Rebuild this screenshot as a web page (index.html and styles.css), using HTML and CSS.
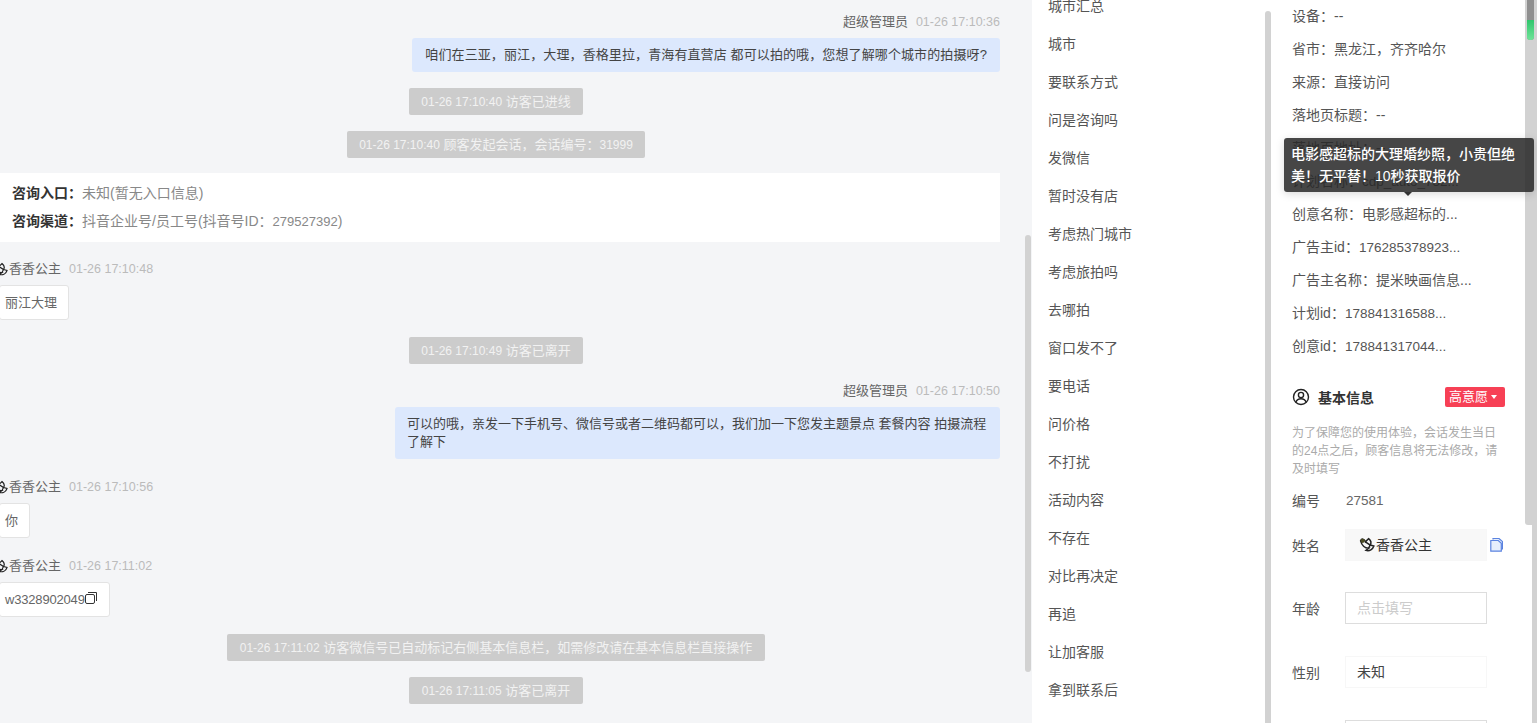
FILE: index.html
```html
<!DOCTYPE html>
<html lang="zh-CN">
<head>
<meta charset="utf-8">
<title>会话详情</title>
<link rel="stylesheet" href="styles.css">
</head>
<body>
<svg class="defs" aria-hidden="true"><defs>
  <symbol id="dove" viewBox="0 0 16 14"><path d="M1.500 3.500C2.500 1 5 1.500 6 4.500L9 1.500C11.500 3.500 11.500 6 10.500 7.500L14 8.500C13 11.500 10 13.500 6.500 12.500L9 10.500C5.500 10.500 2.500 7.500 1.500 3.500Z"/><path d="M6 4.500L10.500 7.500L9 10.500"/></symbol>
</defs></svg>
<div class="app">
  <main class="chat">
    <div class="msgs">
      <div class="head right"><span class="who">超级管理员</span><span class="time">01-26 17:10:36</span></div>
      <div class="row right"><div class="bubble blue b1">咱们在三亚，丽江，大理，香格里拉，青海有直营店 都可以拍的哦，您想了解哪个城市的拍摄呀?</div></div>
      <div class="sys s1"><span><em>01-26 17:10:40</em> 访客已进线</span></div>
      <div class="sys s2"><span><em>01-26 17:10:40</em> 顾客发起会话，会话编号：<em>31999</em></span></div>
      <div class="entry">
        <p><b>咨询入口：</b>未知(暂无入口信息)</p>
        <p><b>咨询渠道：</b>抖音企业号/员工号(抖音号ID：<em>279527392</em>)</p>
      </div>
      <div class="head left h1"><svg class="nick"><use href="#dove"/></svg><span class="who">香香公主</span><span class="time">01-26 17:10:48</span></div>
      <div class="row"><div class="bubble white">丽江大理</div></div>
      <div class="sys s3"><span><em>01-26 17:10:49</em> 访客已离开</span></div>
      <div class="head right h2"><span class="who">超级管理员</span><span class="time">01-26 17:10:50</span></div>
      <div class="row right"><div class="bubble blue b2">可以的哦，亲发一下手机号、微信号或者二维码都可以，我们加一下您发主题景点 套餐内容 拍摄流程了解下</div></div>
      <div class="head left h3"><svg class="nick"><use href="#dove"/></svg><span class="who">香香公主</span><span class="time">01-26 17:10:56</span></div>
      <div class="row"><div class="bubble white">你</div></div>
      <div class="head left h4"><svg class="nick"><use href="#dove"/></svg><span class="who">香香公主</span><span class="time">01-26 17:11:02</span></div>
      <div class="row"><div class="bubble white wechat">w3328902049<svg class="copy" viewBox="0 0 12 12"><rect x=".5" y="2.500" width="9" height="9" rx="1.500"/><path d="M3 .5h8.500V9"/></svg></div></div>
      <div class="sys s4"><span><em>01-26 17:11:02</em> 访客微信号已自动标记右侧基本信息栏，如需修改请在基本信息栏直接操作</span></div>
      <div class="sys s5"><span><em>01-26 17:11:05</em> 访客已离开</span></div>
    </div>
    <div class="thumb chat-thumb"></div>
  </main>
  <aside class="tags">
    <ul class="tag-list">
      <li>城市汇总</li><li>城市</li><li>要联系方式</li><li>问是咨询吗</li><li>发微信</li><li>暂时没有店</li><li>考虑热门城市</li><li>考虑旅拍吗</li><li>去哪拍</li><li>窗口发不了</li><li>要电话</li><li>问价格</li><li>不打扰</li><li>活动内容</li><li>不存在</li><li>对比再决定</li><li>再追</li><li>让加客服</li><li>拿到联系后</li>
    </ul>
    <div class="tags-track"><div class="thumb tags-thumb"></div></div>
  </aside>
  <section class="info">
    <div class="info-body">
      <ul class="facts">
        <li>设备：--</li>
        <li>省市：黑龙江，齐齐哈尔</li>
        <li>来源：直接访问</li>
        <li>落地页标题：--</li>
        <li class="tip-host">落地页地址：--
          <div class="tooltip">电影感超标的大理婚纱照，小贵但绝美！无平替！10秒获取报价</div>
        </li>
        <li>计划名称：<em>cdp_auto_732...</em></li>
        <li>创意名称：电影感超标的...</li>
        <li>广告主id：<em>176285378923...</em></li>
        <li>广告主名称：提米映画信息...</li>
        <li>计划id：<em>178841316588...</em></li>
        <li>创意id：<em>178841317044...</em></li>
      </ul>
      <div class="basic-head">
        <svg class="user" viewBox="0 0 18 18"><circle cx="9" cy="9" r="7.500"/><circle cx="9" cy="7" r="2.600"/><path d="M3.800 14.200c1-2.600 3-3.400 5.200-3.400s4.200.8 5.200 3.400"/></svg>
        <strong>基本信息</strong>
        <span class="level">高意愿<i class="caret"></i></span>
      </div>
      <p class="notice">为了保障您的使用体验，会话发生当日的24点之后，顾客信息将无法修改，请及时填写</p>
      <div class="field plain"><label>编号</label><span>27581</span></div>
      <div class="field name"><label>姓名</label><div class="box filled"><svg class="nick dark" viewBox="0 0 16 14"><use href="#dove"/><circle class="dove-head" cx="3.500" cy="3.500" r="2"/></svg>香香公主</div><svg class="doc" viewBox="0 0 13 14"><path d="M3 1.500V.5h6l3.500 3V11H11"/><path d="M.8 2.500h7.500l3 2.700v8H.8z"/></svg></div>
      <div class="field age"><label>年龄</label><div class="box empty">点击填写</div></div>
      <div class="field gender"><label>性别</label><div class="box soft">未知</div></div>
      <div class="field last"><div class="box empty"></div></div>
    </div>
    <div class="page-track">
      <div class="info-track"><div class="mini"><i></i></div></div>
    </div>
  </section>
</div>
</body>
</html>
```

FILE: styles.css
```css
* { box-sizing: border-box; }
html, body { margin: 0; height: 100%; overflow: hidden; }
body { font-family: "Liberation Sans", "Noto Sans CJK SC", sans-serif; font-size: 13px; color: #555; background: #fff; }
ul { list-style: none; margin: 0; padding: 0; }
p { margin: 0; }
em { font-style: normal; }
.defs { display: none; }
.app { display: flex; width: 1537px; height: 723px; overflow: hidden; }

.chat { width: 1032px; flex: none; background: #f4f5f7; position: relative; overflow: hidden; }
.msgs { width: 1000px; padding-top: 13px; }
.head { display: flex; align-items: center; height: 18px; font-size: 13px; line-height: 18px; }
.head.right { justify-content: flex-end; }
.who { color: #666; }
.time { color: #bbb; margin-left: 8px; font-size: 12.500px; }
.row { display: flex; margin-top: 7px; }
.row.right { justify-content: flex-end; }
.bubble { font-size: 13px; line-height: 18px; border-radius: 3px; }
.blue { background: #dce8fd; color: #444; }
.b1 { padding: 8px 13px; height: 34px; letter-spacing: .11px; }
.b2 { width: 605px; padding: 8px 13px 10px 12px; height: 52px; }
.white { background: #fff; border: 1px solid #e3e3e3; height: 35px; padding: 8px 11px 0 5px; margin-left: -1px; white-space: nowrap; color: #666; }
.wechat { padding-right: 12px; letter-spacing: -.18px; }
.copy { width: 12px; height: 12px; fill: none; stroke: #333; stroke-width: 1; vertical-align: 0; }
.sys { display: flex; justify-content: center; width: 992px; }
.sys span { background: #ccc; color: #f2f2f2; font-size: 13px; line-height: 27px; height: 27px; padding: 0 12px; border-radius: 2px; }
.sys em { font-size: 12px; }
.s1 { margin-top: 16px; }
.s2 { margin-top: 16px; }
.s3 { margin-top: 17px; }
.s4 { margin-top: 17px; }
.s5 { margin-top: 16px; }
.s4 span, .s5 span { padding: 0 13px; }
.entry { background: #fff; margin-top: 15px; height: 69px; padding: 6px 12px; font-size: 14px; line-height: 28px; color: #888; }
.entry em { font-size: 13px; }
.entry b { color: #333; font-weight: 700; }
.nick { width: 16px; height: 14px; fill: none; stroke: #222; stroke-width: 1.200; flex: none; margin-left: -7px; margin-right: 0; }
.nick.dark { width: 17px; height: 15px; margin-left: 0; stroke-width: 1.400; vertical-align: -2px; }
.dove-head { fill: #4b4b22; stroke: none; }
.h1 { margin-top: 18px; }
.h2 { margin-top: 18px; }
.h3 { margin-top: 19px; }
.h4 { margin-top: 19px; }

.thumb { background: #d2d2d2; border-radius: 3px; }
.chat-thumb { position: absolute; left: 1025px; top: 235px; width: 6px; height: 437px; }

.tags { width: 239px; flex: none; display: flex; background: #fff; overflow: hidden; }
.tag-list { width: 233px; margin-top: -13px; padding-left: 16px; }
.tag-list li { height: 38px; line-height: 38px; font-size: 14px; color: #555; }
.tags-track { width: 6px; padding-top: 11px; }
.tags-thumb { width: 6px; height: 800px; }

.info { flex: 1; display: flex; min-width: 0; }
.info-body { width: 254px; flex: none; padding: 0 20px 0 21px; }
.facts li { height: 33px; line-height: 33px; font-size: 14px; color: #555; white-space: nowrap; }
.facts em { font-size: 13.500px; }
.tip-host { position: relative; }
.tooltip { position: absolute; left: -8px; top: 6px; width: 250px; height: 54px; padding: 5px 7px; background: rgba(40,40,40,.86); color: #fff; font-size: 14px; font-weight: 500; line-height: 22px; border-radius: 3px; white-space: normal; z-index: 2; box-shadow: 0 2px 8px rgba(0,0,0,.15); }
.tooltip::after { content: ""; position: absolute; left: 120px; bottom: -4px; border: 4px solid transparent; border-bottom: 0; border-top-color: #333; }
.basic-head { display: flex; align-items: center; margin-top: 23px; height: 22px; }
.user { width: 18px; height: 18px; fill: none; stroke: #222; stroke-width: 1.400; margin-right: 8px; }
.basic-head strong { color: #333; font-size: 14px; font-weight: 700; }
.level { margin-left: auto; width: 60px; height: 20px; background: #f74055; color: #fff; font-size: 13px; line-height: 20px; padding-left: 4px; border-radius: 2px; display: flex; align-items: center; }
.caret { border: 3px solid transparent; border-top: 4px solid #fff; border-bottom: 0; margin-left: 3px; }
.notice { color: #aaa; font-size: 12px; line-height: 18px; margin-top: 16px; }
.field { display: flex; align-items: center; font-size: 14px; color: #555; }
.field label { width: 53px; flex: none; }
.plain { margin-top: 9px; height: 26px; }
.plain label { width: 54px; }
.plain span { color: #666; font-size: 13.500px; }
.box { width: 142px; height: 32px; line-height: 30px; padding: 0 11px; border: 1px solid #f7f7f7; flex: none; }
.filled { background: #f8f8f8; color: #333; padding-left: 13px; }
.empty { border-color: #ddd; color: #ccc; }
.soft { color: #444; }
.doc { width: 13px; height: 14px; fill: #e6eefc; stroke: #5b83e0; stroke-width: 1.200; margin-left: 3px; }
.name { margin-top: 16px; }
.age { margin-top: 31px; }
.gender { margin-top: 32px; }
.last { margin-top: 32px; padding-left: 53px; }

.page-track { flex: 1; min-width: 0; background: linear-gradient(to right, #fff 7px, #d2d2d2 7px); }
.info-track { height: 525px; background: #d2d2d2; border-radius: 0 0 3px 3px; }
.mini { width: 7px; height: 40px; margin-left: 2px; padding-top: 20px; background: #8f8f8f; border-radius: 0 0 3px 3px; overflow: hidden; }
.mini i { display: block; height: 20px; background: linear-gradient(#2fc56c, #6fe398); }
```
